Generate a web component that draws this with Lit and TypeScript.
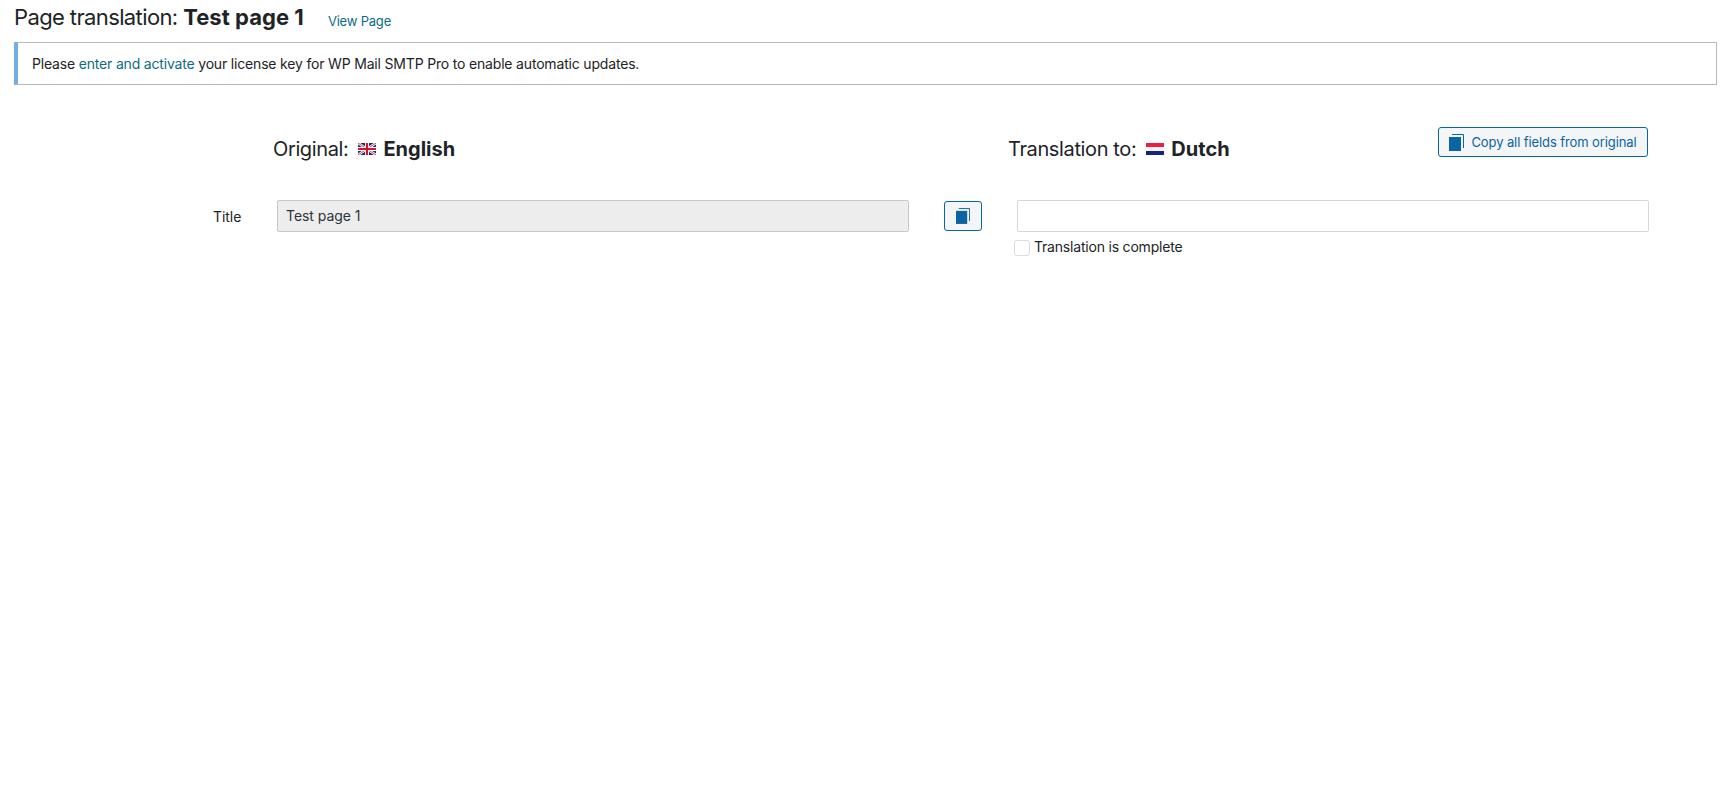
import { LitElement, html, css } from "lit";
import { customElement } from "lit/decorators.js";

const copyIcon = (cls: string) => html`<svg class=${cls} viewBox="0 0 15 17" aria-hidden="true">
  <rect x="0" y="3" width="12" height="14" fill="#0a64a4"></rect>
  <path d="M3 .5H14.5V14" fill="none" stroke="#0a64a4" stroke-width="1"></path>
</svg>`;

@customElement("app-root")
export class AppRoot extends LitElement {
  static styles = css`
    :host {
      display: block;
      width: 1728px;
      height: 789px;
      background: #fff;
      font-family: Inter, "Noto Sans", sans-serif;
      color: #1d2327;
      font-size: 14px;
      overflow: hidden;
    }
    .page { padding: 0 11px 0 14px; }
    .title-row { display: flex; align-items: flex-start; height: 42px; padding-top: 3px; box-sizing: border-box; }
    h1 { margin: 0; font-size: 22px; font-weight: 400; line-height: 29px; letter-spacing: -0.62px; }
    h1 b { font-weight: 700; letter-spacing: 0.05px; }
    a { color: #0e6b85; text-decoration: none; }
    .view { font-size: 13px; line-height: 29px; margin: 4px 0 0 24px; letter-spacing: -0.2px; }
    .notice {
      height: 43px; box-sizing: border-box;
      border: 1px solid #b4b9be; border-left: 4px solid #72aee6;
      padding-left: 14px; display: flex; align-items: center;
      font-size: 14px; letter-spacing: -0.18px;
    }
    .headers {
      display: grid;
      grid-template-columns: 259px 735px 1fr;
      margin-top: 42px; height: 30px; align-items: start;
    }
    .lang { display: flex; align-items: center; font-size: 20px; line-height: 24px; letter-spacing: -0.37px; margin-top: 10px; }
    .lang b { font-weight: 700; letter-spacing: 0; }
    .flag { width: 18px; height: 12px; margin: 0 7px 0 10px; flex: none; }
    .right-head { display: flex; align-items: flex-start; justify-content: space-between; padding-right: 69px; }
    .btn {
      display: flex; align-items: center; justify-content: center; box-sizing: border-box;
      border: 1px solid #0a64a4; border-radius: 3px; background: #f3f5f6; color: #0a64a4; padding: 0;
      font: inherit; font-size: 13px;
    }
    .copy-all { width: 210px; height: 30px; gap: 7px; letter-spacing: -0.1px; flex: none; }
    .copy-all .i { width: 15px; height: 17px; }
    .row {
      display: grid;
      grid-template-columns: 263px 632px 35px 38px 35px 632px;
      margin-top: 43px; align-items: start;
    }
    .label { padding-left: 199px; line-height: 34px; font-size: 14px; white-space: nowrap; letter-spacing: -0.05px; }
    .field {
      height: 32px; box-sizing: border-box; border: 1px solid #d6d6d6; border-radius: 2px;
      background: #fff; font: inherit; font-size: 14px; color: #2c3338; padding: 0 8px 2px;
      display: flex; align-items: center; width: 100%; letter-spacing: -0.05px;
    }
    .field.dis { background: #ededed; border-color: #c8c8c8; }
    .copy-one { grid-column: 4; width: 38px; height: 30px; margin-top: 1px; }
    .copy-one .i { width: 14px; height: 16px; }
    .done { display: flex; align-items: center; margin: 6px 0 0 -3px; height: 17px; gap: 4px; font-size: 14px; letter-spacing: -0.2px; }
    .check { width: 16px; height: 16px; box-sizing: border-box; border: 1px solid #dcdcde; border-radius: 3px; background: #fff; margin-top: 2px; }
  `;

  render() {
    return html`<div class="page">
      <div class="title-row">
        <h1>Page translation: <b>Test page 1</b></h1>
        <a class="view" href="#">View Page</a>
      </div>
      <div class="notice">
        <span>Please <a href="#">enter and activate</a> your license key for WP Mail SMTP Pro to enable automatic updates.</span>
      </div>
      <div class="headers">
        <div></div>
        <div class="lang">Original:
          <svg class="flag" viewBox="0 0 18 12" aria-hidden="true">
            <rect width="18" height="12" fill="#1f2a6e"></rect>
            <path d="M0 0L18 12M18 0L0 12" stroke="#fff" stroke-width="2.4"></path>
            <path d="M0 0L18 12M18 0L0 12" stroke="#d0142c" stroke-width="0.8"></path>
            <path d="M9 0V12M0 6H18" stroke="#fff" stroke-width="4"></path>
            <path d="M9 0V12M0 6H18" stroke="#d0142c" stroke-width="2.2"></path>
          </svg>
          <b>English</b>
        </div>
        <div class="right-head">
          <div class="lang">Translation to:
            <svg class="flag" viewBox="0 0 18 12" aria-hidden="true">
              <rect width="18" height="4" fill="#e8213f"></rect>
              <rect y="4" width="18" height="4" fill="#f4f4f4"></rect>
              <rect y="8" width="18" height="4" fill="#14237e"></rect>
            </svg>
            <b>Dutch</b>
          </div>
          <button class="btn copy-all">${copyIcon("i")}<span>Copy all fields from original</span></button>
        </div>
      </div>
      <div class="row">
        <div class="label">Title</div>
        <div class="field dis">Test page 1</div>
        <div></div>
        <button class="btn copy-one">${copyIcon("i")}</button>
        <div></div>
        <div>
          <div class="field"></div>
          <div class="done"><span class="check"></span><span>Translation is complete</span></div>
        </div>
      </div>
    </div>`;
  }
}
